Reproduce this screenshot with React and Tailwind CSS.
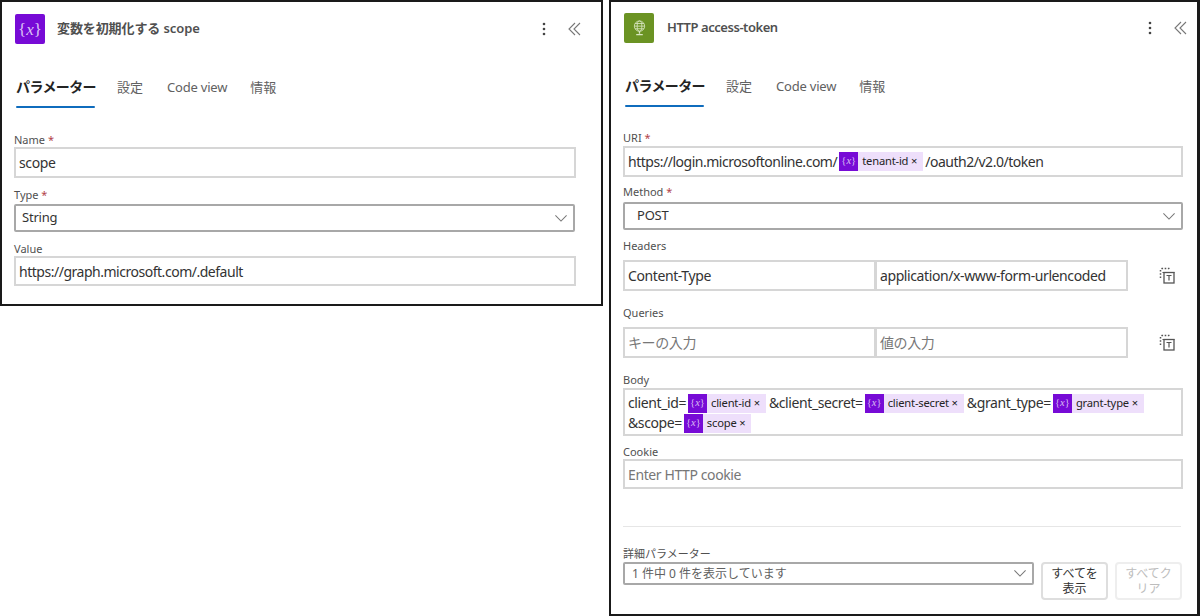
const FONT = "font-['Noto_Sans','Noto_Sans_CJK_JP',sans-serif]";

function VarIcon({ big }) {
  if (big) {
    return (
      <div className="w-[30px] h-[30px] shrink-0 rounded-[2px] bg-[#770bd6] flex items-center justify-center text-[#dcc3f5] text-[17px] leading-none font-['Liberation_Serif',serif]">
        {"{"}<i>x</i>{"}"}
      </div>
    );
  }
  return (
    <span className="w-[19px] h-[19px] shrink-0 bg-[#770bd6] flex items-center justify-center text-[#d9bdf3] text-[10.5px] leading-none font-['Liberation_Serif',serif]">
      {"{"}<i>x</i>{"}"}
    </span>
  );
}

function Token({ name }) {
  return (
    <span className="inline-flex items-center h-[19px] bg-[#eedffb] mx-[2px] tracking-normal">
      <VarIcon />
      <span className="pl-[4px] pr-[6px] text-[11.2px] text-[#242424] whitespace-nowrap tracking-[-0.2px]">{name} ×</span>
    </span>
  );
}

function Label({ children, req, className = "" }) {
  return (
    <div className={"text-[11px] leading-[14px] text-[#505050] " + className}>
      {children}
      {req && <span className="text-[#b3434a]"> *</span>}
    </div>
  );
}

function Chevron({ size = 14, color = "#777777" }) {
  return (
    <svg width={size} height={size * 0.6} viewBox="0 0 15 9" fill="none" className="shrink-0">
      <path d="M1.5 1.5 L7.5 7.5 L13.5 1.5" stroke={color} strokeWidth="1.1" />
    </svg>
  );
}

function Input({ children, className = "", muted }) {
  return (
    <div className={"border-2 border-[#d6d6d6] bg-white flex items-center pl-[3px] text-[14px] tracking-[-0.4px] whitespace-nowrap " + (muted ? "text-[#777777] " : "text-[#333333] ") + className}>
      {children}
    </div>
  );
}

function Select({ value, className = "" }) {
  return (
    <div className={"border-2 border-[#a8a8a8] rounded-[2px] bg-white flex items-center justify-between pr-[5px] text-[13px] text-[#333333] tracking-[-0.2px] " + className}>
      <span>{value}</span>
      <Chevron />
    </div>
  );
}

function HeaderActions() {
  return (
    <div className="flex items-center gap-[22px]">
      <svg width="4" height="14" viewBox="0 0 4 14" fill="#444444">
        <circle cx="2" cy="2" r="1.3" />
        <circle cx="2" cy="7" r="1.3" />
        <circle cx="2" cy="12" r="1.3" />
      </svg>
      <svg width="13" height="14" viewBox="0 0 13 14" fill="none" stroke="#777777" strokeWidth="1.1">
        <path d="M7 1 L1 7 L7 13" />
        <path d="M12 1 L6 7 L12 13" />
      </svg>
    </div>
  );
}

function Tabs() {
  return (
    <div className="flex items-start text-[13px] text-[#616161]">
      <div className="flex flex-col w-[79px]">
        <span className="text-[14px] leading-[20px] font-semibold text-[#242424] whitespace-nowrap tracking-[-0.6px]">パラメーター</span>
        <span className="h-[2px] bg-[#0f6cbd] rounded-full mt-[9px]"></span>
      </div>
      <span className="ml-[22px] leading-[20px]">設定</span>
      <span className="ml-[24px] leading-[20px] tracking-[-0.2px] whitespace-nowrap">Code view</span>
      <span className="ml-[23px] leading-[20px]">情報</span>
    </div>
  );
}

function TrashT() {
  return (
    <svg width="16" height="17" viewBox="0 0 16 17" fill="none" stroke="#555555" className="shrink-0">
      <path d="M1.5 11 V3 Q1.5 1.5 3 1.5 H10 Q11 1.5 11 3" strokeWidth="1.5" strokeDasharray="1.6 1.6" />
      <rect x="5" y="5.5" width="10" height="10.5" strokeWidth="1.3" />
      <path d="M3.5 5.5 H15.5 M7.5 8.5 H12.5 M10 8.5 V13.5" strokeWidth="1.2" />
    </svg>
  );
}

function GlobeIcon() {
  return (
    <svg width="15" height="18" viewBox="0 0 16 18" fill="none" stroke="#d9e6c2" strokeWidth="0.9">
      <circle cx="8" cy="7" r="5.5" />
      <ellipse cx="8" cy="7" rx="2.5" ry="5.5" />
      <path d="M2.5 7 H13.5 M3.3 4.2 H12.7 M3.3 9.8 H12.7" />
      <path d="M8 12.5 V15 M4.5 16 H11.5" strokeWidth="1.4" />
    </svg>
  );
}

export default function App() {
  return (
    <div className={"w-[1200px] h-[616px] bg-white flex items-start overflow-hidden " + FONT}>
      {/* left */}
      <div className="w-[603px] h-[306px] shrink-0 border-2 border-[#1a1a1a] px-[12px] bg-white">
        <div className="flex items-center justify-between h-[30px] mt-[12px] pl-[1px] pr-[8px]">
          <div className="flex items-center gap-[12px]">
            <VarIcon big />
            <span className="text-[13px] font-semibold text-[#505050] tracking-[-0.1px]">変数を初期化する scope</span>
          </div>
          <HeaderActions />
        </div>
        <div className="mt-[33px] pl-[2px]">
          <Tabs />
        </div>
        <Label req className="mt-[25px]">Name</Label>
        <Input className="w-[562px] h-[31px]">scope</Input>
        <Label req className="mt-[10px]">Type</Label>
        <Select value="String" className="w-[561px] h-[28px] mt-[2px] pl-[6px]" />
        <Label className="mt-[10px]">Value</Label>
        <Input className="w-[562px] h-[30px] tracking-[-0.48px]">https://graph.microsoft.com/.default</Input>
      </div>

      {/* right */}
      <div className="ml-[6px] w-[591px] h-[616px] shrink-0 border-2 border-[#1a1a1a] border-r-[3px] pl-[12px] bg-white">
        <div className="flex items-center justify-between w-[564px] h-[30px] mt-[11px] pl-[1px]">
          <div className="flex items-center gap-[13px]">
            <div className="w-[30px] h-[30px] rounded-[2px] bg-[#6b9323] flex items-center justify-center">
              <GlobeIcon />
            </div>
            <span className="text-[13px] font-semibold text-[#505050] tracking-[-0.45px]">HTTP access-token</span>
          </div>
          <HeaderActions />
        </div>
        <div className="mt-[33px] pl-[2px]">
          <Tabs />
        </div>
        <Label req className="mt-[24px]">URI</Label>
        <Input className="w-[560px] h-[31px] mt-[1px] tracking-[-0.48px]">
          https://login.microsoftonline.com/<Token name="tenant-id" />/oauth2/v2.0/token
        </Input>
        <Label req className="mt-[8px]">Method</Label>
        <Select value="POST" className="w-[560px] h-[28px] mt-[3px] pl-[12px]" />
        <Label className="mt-[9px]">Headers</Label>
        <div className="flex items-center mt-[7px]">
          <Input className="w-[253px] h-[31px]">Content-Type</Input>
          <Input className="w-[253px] h-[31px] -ml-[1px]">application/x-www-form-urlencoded</Input>
          <div className="ml-[31px]"><TrashT /></div>
        </div>
        <Label className="mt-[15px]">Queries</Label>
        <div className="flex items-center mt-[7px]">
          <Input muted className="w-[253px] h-[31px]">キーの入力</Input>
          <Input muted className="w-[253px] h-[31px] -ml-[1px]">値の入力</Input>
          <div className="ml-[31px]"><TrashT /></div>
        </div>
        <Label className="mt-[15px]">Body</Label>
        <div className="border-2 border-[#d6d6d6] bg-white w-[560px] h-[48px] mt-[1px] pl-[3px] pt-[3px] text-[14px] leading-[20px] tracking-[-0.4px] text-[#333333] whitespace-nowrap">
          <div className="flex items-center h-[20px]">
            client_id=<Token name="client-id" /><span className="ml-[1px]">&amp;client_secret=</span><Token name="client-secret" /><span className="ml-[1px]">&amp;grant_type=</span><Token name="grant-type" />
          </div>
          <div className="flex items-center h-[20px]">
            &amp;scope=<Token name="scope" />
          </div>
        </div>
        <Label className="mt-[9px]">Cookie</Label>
        <Input muted className="w-[560px] h-[30px]">Enter HTTP cookie</Input>
        <div className="w-[558px] h-[1px] bg-[#e6e6e6] mt-[37px]"></div>
        <Label className="mt-[20px]">詳細パラメーター</Label>
        <div className="flex items-start mt-[1px]">
          <div className="w-[411px] h-[23px] border-2 border-[#a8a8a8] rounded-[2px] flex items-center justify-between pl-[7px] pr-[5px] text-[12px] text-[#616161]">
            <span>1 件中 0 件を表示しています</span>
            <Chevron />
          </div>
          <div className="ml-[7px] w-[67px] h-[38px] border-2 border-[#dedede] rounded-[4px] flex items-center justify-center text-center text-[12px] leading-[15px] text-[#333333]">
            すべてを<br />表示
          </div>
          <div className="ml-[7px] w-[67px] h-[38px] border-2 border-[#eeeeee] rounded-[4px] flex items-center justify-center text-center text-[12px] leading-[15px] text-[#bdbdbd]">
            すべてク<br />リア
          </div>
        </div>
      </div>
    </div>
  );
}
